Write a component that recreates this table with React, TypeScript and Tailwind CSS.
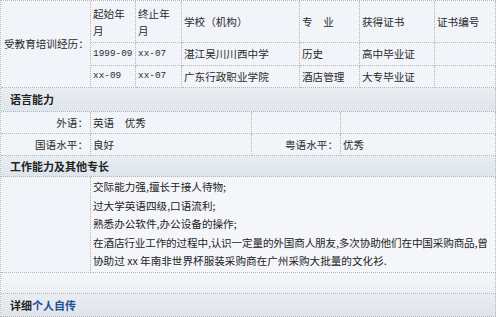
import React from "react";

const cjk = { fontFamily: '"Noto Sans CJK SC", "Noto Sans", sans-serif' };
const mono = { fontFamily: '"Liberation Mono", monospace', fontSize: "9.4px" };

const cell = "border-r border-b border-dotted border-[#b4b4b4] bg-[#f1f4f9] flex items-center px-[2px] whitespace-nowrap overflow-hidden";
const head = "col-span-full border-r border-b border-dotted border-[#b4b4b4] bg-gradient-to-b from-[#e9edf2] to-[#dfe5ec] flex items-center pl-[9px] font-bold text-[#222] text-[11px]";

export default function App() {
  return (
    <div className="w-[499px] h-[317px] bg-white overflow-hidden text-[10.6px] text-[#2a2a2a]" style={cjk}>
      <div className="w-[496px] border-t border-l border-dotted border-[#b4b4b4]">
        {/* Education */}
        <div className="grid grid-cols-[90px_45px_46px_118px_60px_75px_61px] grid-rows-[42px_23px_22px]">
          <div className={cell + " row-span-3 pl-[3px] bg-[#eef2f8]"}>受教育培训经历：</div>
          <div className={cell + " leading-[17px] whitespace-normal"}><div>起始年<br />月</div></div>
          <div className={cell + " leading-[17px] whitespace-normal"}><div>终止年<br />月</div></div>
          <div className={cell}>学校（机构）</div>
          <div className={cell}>专　业</div>
          <div className={cell}>获得证书</div>
          <div className={cell}>证书编号</div>

          <div className={cell}><span style={mono}>1999-09</span></div>
          <div className={cell}><span style={mono}>xx-07</span></div>
          <div className={cell}>湛江吴川川西中学</div>
          <div className={cell}>历史</div>
          <div className={cell}>高中毕业证</div>
          <div className={cell}></div>

          <div className={cell}><span style={mono}>xx-09</span></div>
          <div className={cell}><span style={mono}>xx-07</span></div>
          <div className={cell}>广东行政职业学院</div>
          <div className={cell}>酒店管理</div>
          <div className={cell}>大专毕业证</div>
          <div className={cell}></div>
        </div>

        {/* Language */}
        <div className="grid grid-cols-[90px_161px_89px_155px] grid-rows-[24px_22px_22px]">
          <div className={head}>语言能力</div>
          <div className={cell + " justify-end"}>外语：</div>
          <div className={cell}>英语　优秀</div>
          <div className={cell}></div>
          <div className={cell}></div>
          <div className={cell + " justify-end"}>国语水平：</div>
          <div className={cell}>良好</div>
          <div className={cell + " justify-end"}>粤语水平：</div>
          <div className={cell}>优秀</div>
        </div>

        {/* Work */}
        <div className="grid grid-cols-[90px_405px] grid-rows-[21px_96px_21px_23px]">
          <div className={head}>工作能力及其他专长</div>
          <div className={cell + " bg-[#f1f4f9]"}></div>
          <div className="border-r border-b border-dotted border-[#b4b4b4] bg-[#f4f6fa] px-[2px] pt-[1px] leading-[18.6px] text-[#222] whitespace-nowrap overflow-hidden">
            <div>交际能力强,擅长于接人待物;</div>
            <div>过大学英语四级,口语流利;</div>
            <div>熟悉办公软件,办公设备的操作;</div>
            <div className="tracking-[-0.15px]">在酒店行业工作的过程中,认识一定量的外国商人朋友,多次协助他们在中国采购商品,曾</div>
            <div>协助过 xx 年南非世界杯服装采购商在广州采购大批量的文化衫.</div>
          </div>
          <div className="col-span-full border-r border-b border-dotted border-[#b4b4b4] bg-gradient-to-b from-[#f4f6fa] to-[#eceff4]"></div>
          <div className={head}>
            <span>详细</span><span className="text-[#1e4e98]">个人自传</span>
          </div>
        </div>
      </div>
    </div>
  );
}
